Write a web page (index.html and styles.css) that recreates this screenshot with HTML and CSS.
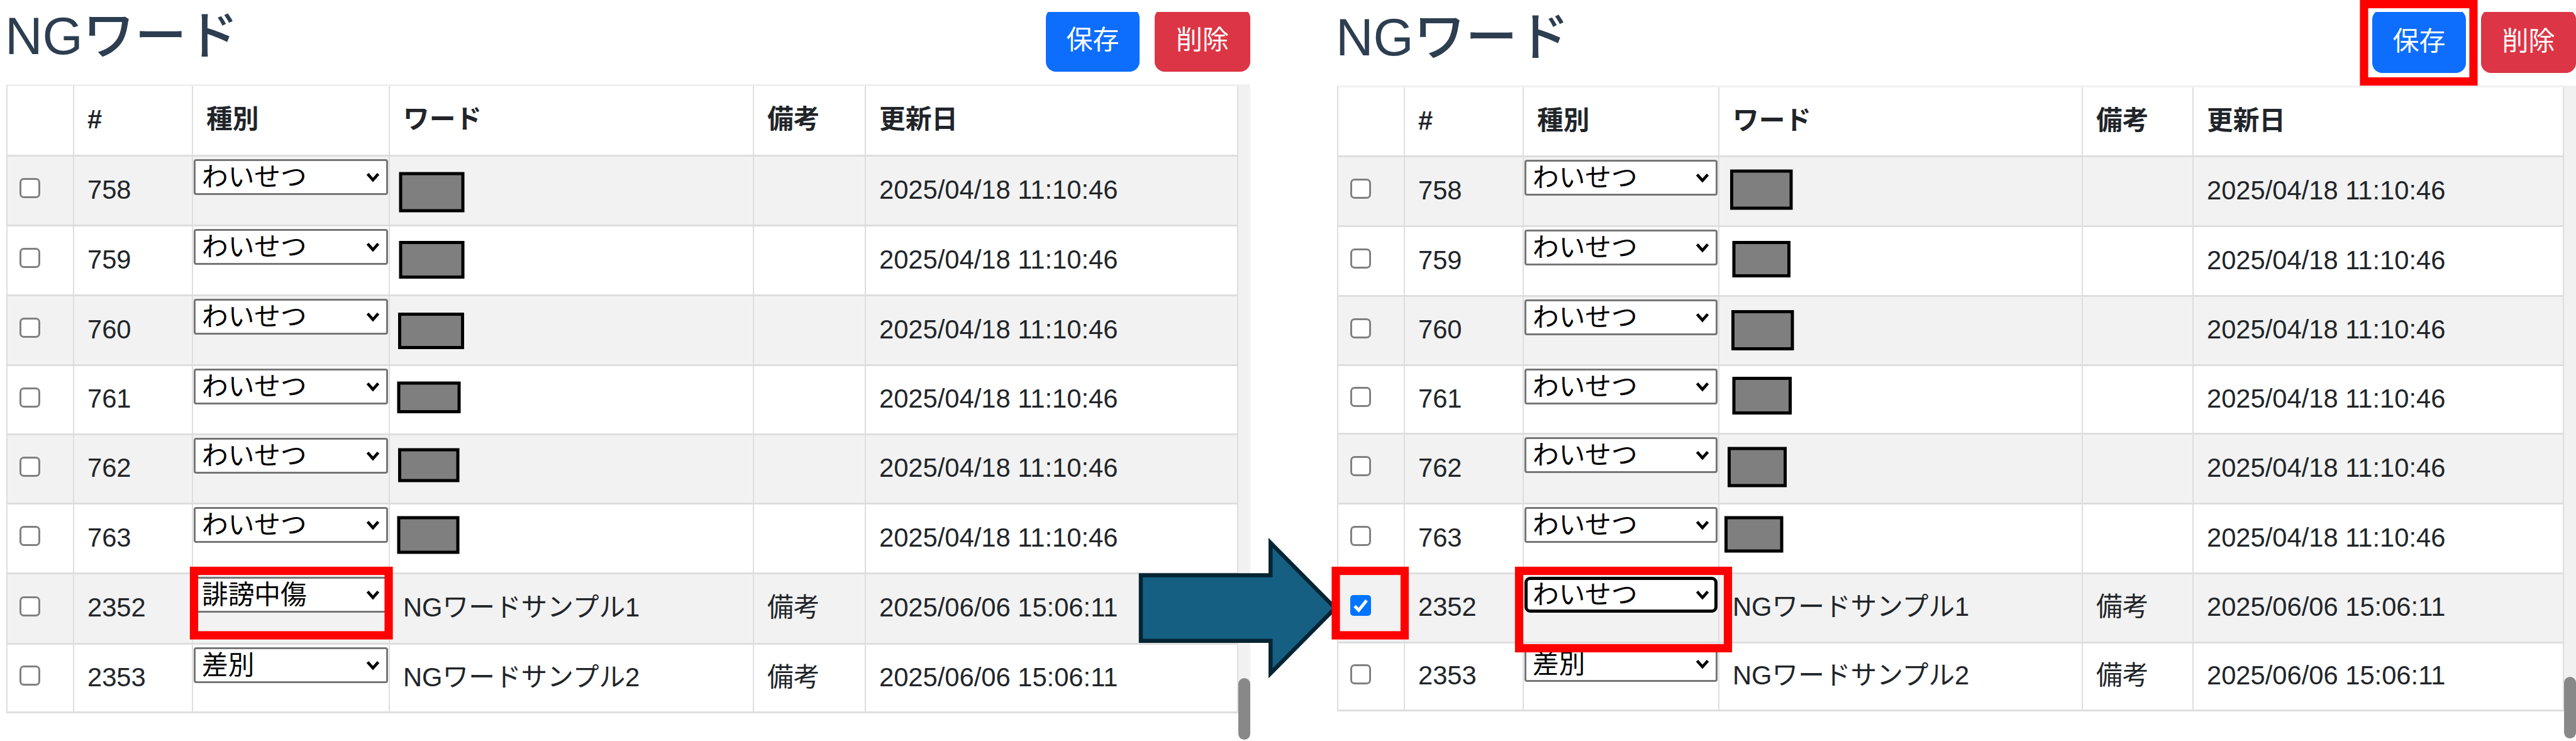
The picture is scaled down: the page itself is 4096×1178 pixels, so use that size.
FILE: index.html
```html
<!DOCTYPE html>
<html lang="ja">
  <head>
    <meta charset="UTF-8" />
    <meta name="viewport" content="width=device-width, initial-scale=1.0" />
    <title>NGワード</title>
    <link rel="stylesheet" href="styles.css">
  </head>
  <body>
    <svg class="symbols">
      <symbol id="chevron" viewBox="0 0 22 16">
        <path d="M2.5 2.5 L11 12 L19.5 2.5" />
      </symbol>
    </svg>

    <div class="screens">
      <section class="screen before">
        <header>
          <h1>NGワード</h1>
          <div class="buttons">
            <button class="btn save">保存</button>
            <button class="btn delete">削除</button>
          </div>
        </header>
        <div class="list">
          <table>
            <colgroup>
              <col class="c-check"><col class="c-id"><col class="c-type"><col class="c-word"><col class="c-note"><col class="c-date">
            </colgroup>
            <thead>
              <tr><th></th><th>#</th><th>種別</th><th>ワード</th><th>備考</th><th>更新日</th></tr>
            </thead>
            <tbody>
              <tr>
                <td><input type="checkbox"></td>
                <td>758</td>
                <td class="type"><div class="select">わいせつ<svg><use href="#chevron" /></svg></div></td>
                <td></td>
                <td></td>
                <td>2025/04/18 11:10:46</td>
              </tr>
              <tr>
                <td><input type="checkbox"></td>
                <td>759</td>
                <td class="type"><div class="select">わいせつ<svg><use href="#chevron" /></svg></div></td>
                <td></td>
                <td></td>
                <td>2025/04/18 11:10:46</td>
              </tr>
              <tr>
                <td><input type="checkbox"></td>
                <td>760</td>
                <td class="type"><div class="select">わいせつ<svg><use href="#chevron" /></svg></div></td>
                <td></td>
                <td></td>
                <td>2025/04/18 11:10:46</td>
              </tr>
              <tr>
                <td><input type="checkbox"></td>
                <td>761</td>
                <td class="type"><div class="select">わいせつ<svg><use href="#chevron" /></svg></div></td>
                <td></td>
                <td></td>
                <td>2025/04/18 11:10:46</td>
              </tr>
              <tr>
                <td><input type="checkbox"></td>
                <td>762</td>
                <td class="type"><div class="select">わいせつ<svg><use href="#chevron" /></svg></div></td>
                <td></td>
                <td></td>
                <td>2025/04/18 11:10:46</td>
              </tr>
              <tr>
                <td><input type="checkbox"></td>
                <td>763</td>
                <td class="type"><div class="select">わいせつ<svg><use href="#chevron" /></svg></div></td>
                <td></td>
                <td></td>
                <td>2025/04/18 11:10:46</td>
              </tr>
              <tr>
                <td><input type="checkbox"></td>
                <td>2352</td>
                <td class="type"><div class="select">誹謗中傷<svg><use href="#chevron" /></svg></div></td>
                <td>NGワードサンプル1</td>
                <td>備考</td>
                <td>2025/06/06 15:06:11</td>
              </tr>
              <tr>
                <td><input type="checkbox"></td>
                <td>2353</td>
                <td class="type"><div class="select">差別<svg><use href="#chevron" /></svg></div></td>
                <td>NGワードサンプル2</td>
                <td>備考</td>
                <td>2025/06/06 15:06:11</td>
              </tr>
            </tbody>
          </table>
          <div class="scrollbar"><div class="thumb"></div></div>
        </div>
      </section>

      <section class="screen after">
        <header>
          <h1>NGワード</h1>
          <div class="buttons">
            <button class="btn save">保存</button>
            <button class="btn delete">削除</button>
          </div>
        </header>
        <div class="list">
          <table>
            <colgroup>
              <col class="c-check"><col class="c-id"><col class="c-type"><col class="c-word"><col class="c-note"><col class="c-date">
            </colgroup>
            <thead>
              <tr><th></th><th>#</th><th>種別</th><th>ワード</th><th>備考</th><th>更新日</th></tr>
            </thead>
            <tbody>
              <tr>
                <td><input type="checkbox"></td>
                <td>758</td>
                <td class="type"><div class="select">わいせつ<svg><use href="#chevron" /></svg></div></td>
                <td></td>
                <td></td>
                <td>2025/04/18 11:10:46</td>
              </tr>
              <tr>
                <td><input type="checkbox"></td>
                <td>759</td>
                <td class="type"><div class="select">わいせつ<svg><use href="#chevron" /></svg></div></td>
                <td></td>
                <td></td>
                <td>2025/04/18 11:10:46</td>
              </tr>
              <tr>
                <td><input type="checkbox"></td>
                <td>760</td>
                <td class="type"><div class="select">わいせつ<svg><use href="#chevron" /></svg></div></td>
                <td></td>
                <td></td>
                <td>2025/04/18 11:10:46</td>
              </tr>
              <tr>
                <td><input type="checkbox"></td>
                <td>761</td>
                <td class="type"><div class="select">わいせつ<svg><use href="#chevron" /></svg></div></td>
                <td></td>
                <td></td>
                <td>2025/04/18 11:10:46</td>
              </tr>
              <tr>
                <td><input type="checkbox"></td>
                <td>762</td>
                <td class="type"><div class="select">わいせつ<svg><use href="#chevron" /></svg></div></td>
                <td></td>
                <td></td>
                <td>2025/04/18 11:10:46</td>
              </tr>
              <tr>
                <td><input type="checkbox"></td>
                <td>763</td>
                <td class="type"><div class="select">わいせつ<svg><use href="#chevron" /></svg></div></td>
                <td></td>
                <td></td>
                <td>2025/04/18 11:10:46</td>
              </tr>
              <tr>
                <td>
                  <span class="checked">
                    <svg viewBox="0 0 33 33"><path d="M7 17.5 L13.5 24 L26 8.5" /></svg>
                  </span>
                </td>
                <td>2352</td>
                <td class="type"><div class="select focus">わいせつ<svg><use href="#chevron" /></svg></div></td>
                <td>NGワードサンプル1</td>
                <td>備考</td>
                <td>2025/06/06 15:06:11</td>
              </tr>
              <tr>
                <td><input type="checkbox"></td>
                <td>2353</td>
                <td class="type"><div class="select">差別<svg><use href="#chevron" /></svg></div></td>
                <td>NGワードサンプル2</td>
                <td>備考</td>
                <td>2025/06/06 15:06:11</td>
              </tr>
            </tbody>
          </table>
          <div class="scrollbar"><div class="thumb"></div></div>
        </div>
      </section>
    </div>

    <!-- masks, arrow and red frames drawn over both screens -->
    <svg class="notes" viewBox="0 0 4096 1178">
      <g class="mask">
        <rect x="637" y="276" width="99" height="59" />
        <rect x="637" y="385.5" width="99" height="55" />
        <rect x="635.5" y="499.5" width="100" height="53" />
        <rect x="634" y="609" width="96" height="45.5" />
        <rect x="635.5" y="715" width="92.5" height="49" />
        <rect x="634" y="823" width="94" height="55" />
        <rect x="2753.5" y="272" width="94.5" height="59" />
        <rect x="2757" y="385.5" width="87.5" height="53" />
        <rect x="2755.5" y="495.5" width="94.5" height="59" />
        <rect x="2757" y="601.5" width="89.5" height="55" />
        <rect x="2749.5" y="713" width="89" height="59" />
        <rect x="2744.5" y="823" width="88.5" height="53" />
      </g>
      <path class="arrow" d="M1814 914.6 H2020.3 V863 L2123 966.7 L2020.3 1070.4 V1018.8 H1814 Z" />
      <g class="frame">
        <rect x="308.5" y="907.5" width="309.5" height="102.5" />
        <rect x="2124" y="907.5" width="109.5" height="102.5" />
        <rect x="2415.5" y="907.5" width="332" height="123" />
        <rect x="3759" y="6.5" width="174" height="123" />
      </g>
    </svg>
  </body>
</html>
```

FILE: styles.css
```css
* {
  box-sizing: border-box;
}

body {
  margin: 0;
  width: 4096px;
  height: 1178px;
  position: relative;
  overflow: hidden;
  background: #fff;
  color: #212529;
  font-family: "Liberation Sans", "Noto Sans CJK JP", sans-serif;
  font-size: 41.7px;
}

.symbols {
  display: none;
}

.screens {
  display: flex;
  height: 1178px;
}

.screen {
  flex: none;
  display: flex;
  flex-direction: column;
}

.before {
  width: 1978px;
  margin-left: 10px;
}

.after {
  width: 1970px;
  margin-left: 138px;
}

header {
  display: flex;
  justify-content: space-between;
  height: 134px;
}

.after header {
  height: 136px;
}

h1 {
  margin: 0 0 0 -2px;
  padding-top: 9px;
  color: #2c3e50;
  font-size: 82.5px;
  font-weight: 500;
  line-height: 96px;
}

.after h1 {
  padding-top: 11px;
}

/* the top edge of the buttons is cut off */
.buttons {
  display: flex;
  gap: 24px;
  height: 95px;
  margin-top: 19px;
  overflow: hidden;
  align-items: flex-end;
}

.after .buttons {
  height: 97px;
}

.btn {
  flex: none;
  width: 149px;
  height: 101px;
  padding: 0;
  border: none;
  border-radius: 16px;
  color: #fff;
  font-family: inherit;
  font-size: 42px;
  line-height: 101px;
}

.save {
  background: #0d6efd;
}

.delete {
  width: 152px;
  background: #dc3545;
}

.after .delete {
  width: 151px;
}

.list {
  flex: 1;
  display: flex;
}

table {
  flex: none;
  align-self: flex-start;
  table-layout: fixed;
  border-spacing: 0;
  border-top: 3px solid #f0f0f0;
  border-left: 2px solid #dedede;
}

.before table {
  width: 1959px;
}

.after table {
  width: 1951px;
}

.c-check {
  width: 106px;
}

.c-id {
  width: 189px;
}

.before .c-type {
  width: 313px;
}

.before .c-word {
  width: 579px;
}

.before .c-note {
  width: 178px;
}

.after .c-type {
  width: 311px;
}

.after .c-word {
  width: 578px;
}

.after .c-note {
  width: 176px;
}

th,
td {
  padding: 0 0 3px 21px;
  border-right: 2px solid #dedede;
  border-bottom: 3px solid #dedede;
  text-align: left;
  vertical-align: middle;
  line-height: 60px;
  white-space: nowrap;
}

.before tr {
  height: 111px;
}

.before thead tr,
.before tbody tr:nth-child(7) {
  height: 112px;
}

.before tbody tr:nth-child(4),
.before tbody tr:nth-child(5) {
  height: 110px;
}

.before tbody tr:nth-child(8) {
  height: 109px;
}

.after tr {
  height: 111px;
}

.after tbody tr:nth-child(3),
.after tbody tr:nth-child(7) {
  height: 110px;
}

.after tbody tr:nth-child(4) {
  height: 109px;
}

.after tbody tr:nth-child(8) {
  height: 108px;
}

tbody tr:nth-child(odd) {
  background: #f2f2f2;
}

td.type {
  padding: 4px 1px 0;
  vertical-align: top;
}

.select {
  display: flex;
  align-items: center;
  justify-content: space-between;
  height: 57px;
  padding: 0 10px;
  border: 3px solid #767676;
  border-radius: 4px;
  background: #fff;
  color: #000;
  line-height: 50px;
}

.select.focus {
  padding: 0 8px;
  border: 5px solid #000;
  border-radius: 9px;
}

.select svg {
  width: 22px;
  height: 16px;
  fill: none;
  stroke: #000;
  stroke-width: 4.6;
}

input[type="checkbox"],
.checked {
  appearance: none;
  display: block;
  width: 33px;
  height: 32px;
  margin: -5px 0 0 -2px;
  border: 3px solid #808080;
  border-radius: 7px;
  background: #fff;
}

.checked {
  height: 33px;
  border: none;
  border-radius: 5px;
  background: #0075ff;
}

.checked svg {
  display: block;
  fill: none;
  stroke: #fff;
  stroke-width: 5;
}

.scrollbar {
  flex: 1;
  display: flex;
  flex-direction: column;
  justify-content: flex-end;
  background: linear-gradient(#f1f1f1, #f1f1f1) no-repeat 0 0 / 100% 956px;
}

.thumb {
  height: 98px;
  margin-bottom: 2px;
  border-radius: 10px;
  background: #888;
}

.after .thumb {
  margin-bottom: 4px;
}

.notes {
  position: absolute;
  top: 0;
  left: 0;
  width: 4096px;
  height: 1178px;
}

.mask {
  fill: #7f7f7f;
  stroke: #000;
  stroke-width: 5;
}

.arrow {
  fill: #156082;
  stroke: #042433;
  stroke-width: 6.5;
}

.frame {
  fill: none;
  stroke: #f00;
  stroke-width: 13.2;
}
```
